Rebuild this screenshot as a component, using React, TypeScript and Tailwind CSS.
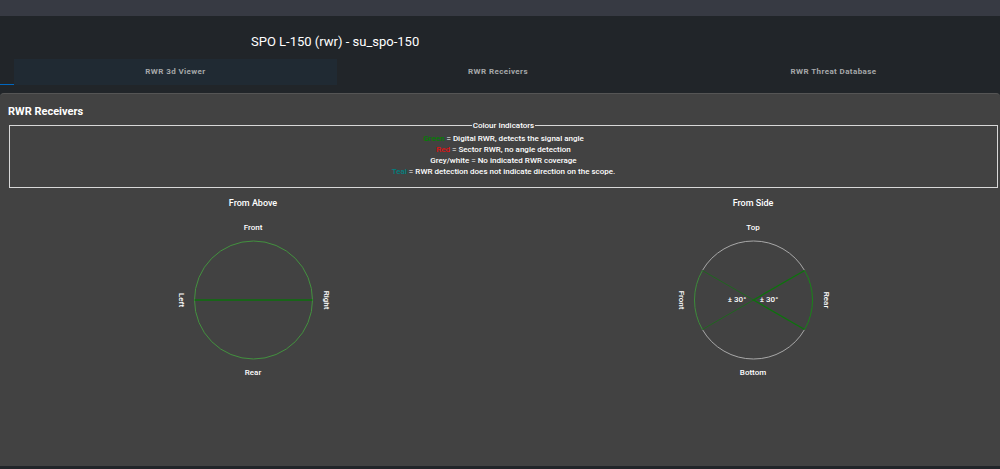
import React from "react";
import clsx from "clsx";

const tabs = [
  { label: "RWR 3d Viewer", focused: true },
  { label: "RWR Receivers", focused: false },
  { label: "RWR Threat Database", focused: false },
];

const indicators = [
  { name: "Green", color: "text-[#008000]", text: "Digital RWR, detects the signal angle" },
  { name: "Red", color: "text-[#e01010]", text: "Sector RWR, no angle detection" },
  { name: "Grey/white", color: "text-white", text: "No indicated RWR coverage" },
  { name: "Teal", color: "text-[#008080]", text: "RWR detection does not indicate direction on the scope." },
];

type ScopeProps = {
  title: string;
  top: string;
  right: string;
  bottom: string;
  left: string;
  children: React.ReactNode;
};

function Scope({ title, top, right, bottom, left, children }: ScopeProps) {
  return (
    <section className="flex flex-col items-center pl-1.5">
      <h3 className="text-[9px] leading-[14px] font-medium">{title}</h3>
      <svg
        viewBox="0 0 180 180"
        className="h-[180px] w-[180px] fill-white text-[8px] font-medium"
        textAnchor="middle"
      >
        <text x="90" y="20">{top}</text>
        <text x="90" y="165">{bottom}</text>
        <text transform="translate(16 90) rotate(90)">{left}</text>
        <text transform="translate(161 90) rotate(90)">{right}</text>
        {children}
      </svg>
    </section>
  );
}

export default function App() {
  return (
    <div className="min-h-screen bg-[#212529] pb-[3px] font-['Roboto',sans-serif] text-white">
      <div className="h-4 bg-[#373a43]" />

      <header>
        <h1 className="pt-4 pl-[251px] text-[13px] leading-5">SPO L-150 (rwr) - su_spo-150</h1>
        <nav className="mt-[7px] flex pb-2">
          {/* End of the ink bar, scrolled off to the left */}
          <div className="w-3.5 border-b border-[#0067c0]" />
          <div className="grid flex-1 grid-cols-[323fr_322fr_341fr]">
            {tabs.map((tab) => (
              <button
                key={tab.label}
                type="button"
                className={clsx(
                  "h-[26px] text-[8px] font-bold tracking-wider text-[#a6a8a9] last:pl-2",
                  tab.focused && "bg-[#202a33]"
                )}
              >
                {tab.label}
              </button>
            ))}
          </div>
        </nav>
      </header>

      <main className="min-h-[373px] rounded-t-sm border-t border-[#555] bg-[#424242]">
        <h2 className="px-2 pt-2.5 text-[11px] leading-4 font-bold">RWR Receivers</h2>

        <fieldset className="mr-0.5 ml-[9px] border border-[#d8d8d8] pt-[2px] pb-[10px] text-center text-[8px] leading-[11px] font-medium">
          <legend className="mx-auto px-[1px]">Colour Indicators</legend>
          {indicators.map((item) => (
            <p key={item.name}>
              <span className={item.color}>{item.name}</span> = {item.text}
            </p>
          ))}
        </fieldset>

        <div className="mt-2 grid grid-cols-2">
          <Scope title="From Above" top="Front" right="Right" bottom="Rear" left="Left">
            <circle cx="90.5" cy="90" r="59" fill="none" stroke="#43913f" />
            <path d="M31.5 90H149.5" stroke="#0c700c" strokeWidth="1.5" />
          </Scope>

          <Scope title="From Side" top="Top" right="Rear" bottom="Bottom" left="Front">
            <path d="M39.4 60.5A59 59 0 0 1 141.6 60.5" fill="none" stroke="#a8a8a8" />
            <path d="M39.4 119.5A59 59 0 0 0 141.6 119.5" fill="none" stroke="#a8a8a8" />
            <path d="M39.4 60.5A59 59 0 0 0 39.4 119.5" fill="none" stroke="#3c8c3a" />
            <path d="M141.6 60.5A59 59 0 0 1 141.6 119.5" fill="none" stroke="#198419" />
            <path d="M39.4 60.5L90.5 90L39.4 119.5" fill="none" stroke="#1f661f" />
            <path d="M141.6 60.5L90.5 90L141.6 119.5" fill="none" stroke="#0c740c" strokeWidth="1.3" />
            <text x="74" y="92">± 30°</text>
            <text x="106" y="92">± 30°</text>
          </Scope>
        </div>
      </main>
    </div>
  );
}
